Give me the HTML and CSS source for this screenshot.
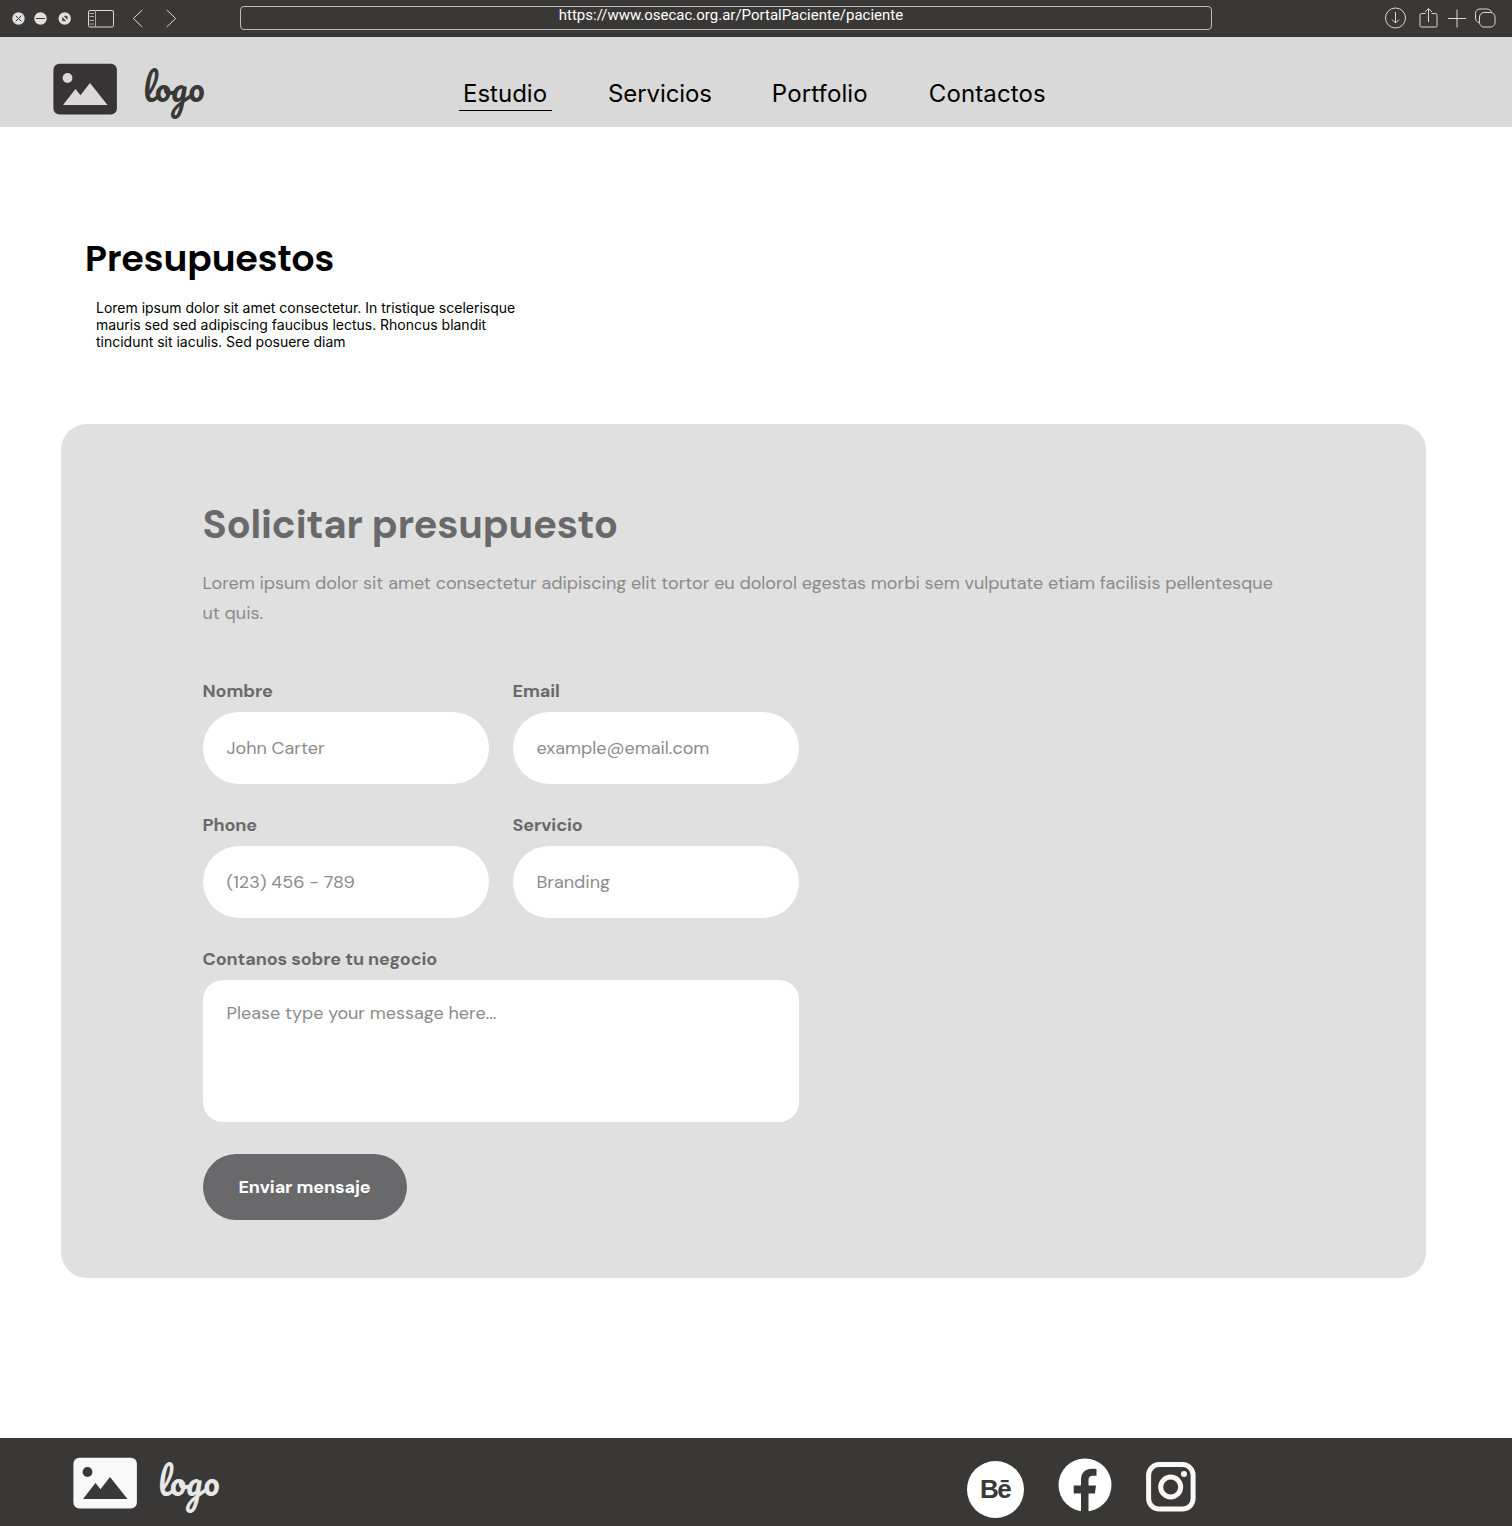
FILE: index.html
```html
<!DOCTYPE html>
<html lang="es">
<head>
<meta charset="utf-8">
<title>Presupuestos</title>
<link rel="stylesheet" href="styles.css">
</head>
<body>
<div class="browser-bar">
  <svg class="browser-left" width="190" height="37" viewBox="0 0 190 37" fill="none" stroke="#d9d9d9">
    <g fill="#e0e0e0" stroke="none"><circle cx="18.5" cy="18.5" r="6.2"/><circle cx="40.5" cy="18.5" r="6.2"/><circle cx="64.7" cy="18.5" r="6.2"/></g>
    <path d="M15.7 15.7l5.600 5.600M21.300 15.700l-5.600 5.600M36 18.500h9" stroke="#3a3836"/>
    <path d="M64.200 16.200h3v3zM62.500 17.500v3.300h3.300z" fill="#3a3836" stroke="#3a3836" stroke-width=".5"/>
    <rect x="88.500" y="10.500" width="25" height="16.500" rx="1.500"/>
    <path d="M95.500 10.500v16.500M89.500 13.500h4.500M89.500 16.500h4.500M89.500 20.500h4.500M89.500 24h4.500" stroke="#aaa"/>
    <path d="M142.300 10l-9 8.500 9 8.500M166.700 10l9 8.500-9 8.500"/>
  </svg>
  <div class="address"><span class="url">https://www.osecac.org.ar/PortalPaciente/paciente</span></div>
  <svg class="browser-right" width="142" height="37" viewBox="0 0 142 37" fill="none" stroke="#d9d9d9">
    <circle cx="25.500" cy="18" r="10"/><path d="M25.500 12v10.500M22 19.500l3.500 3.500 3.500-3.500"/>
    <path d="M55.500 13.500h-4a1.500 1.500 0 0 0-1.500 1.500v10.500a1.500 1.500 0 0 0 1.500 1.500h14a1.500 1.500 0 0 0 1.500-1.500v-10.500a1.500 1.500 0 0 0-1.500-1.500h-4M58.500 22V9M55 12l3.500-3.500 3.500 3.500"/>
    <path d="M78 18.500h18M87 9.500v18"/>
    <rect x="109.500" y="12.500" width="15.500" height="14.500" rx="4.500"/>
    <path d="M109.500 22.500c-2.500 0-4-2-4-4.500v-4.500c0-3 2-4.500 4.500-4.500h6.500c2.500 0 4.500 1 5 3.500"/>
  </svg>
</div>

<header class="site-header">
  <a class="brand">
    <svg width="64" height="52" viewBox="0 0 64 52"><rect x=".4" y=".700" width="63.500" height="50.800" rx="6" fill="#383435"/><g fill="#d9d9d9"><circle cx="14.500" cy="15" r="4.900"/><path d="M10 42L22.500 26l5 6.300L37 20l17.500 22z"/></g></svg>
    <span class="wordmark">logo</span>
  </a>
  <nav class="nav">
    <a class="nav-link active">Estudio</a>
    <a class="nav-link services">Servicios</a>
    <a class="nav-link portfolio">Portfolio</a>
    <a class="nav-link contact">Contactos</a>
  </nav>
</header>

<main>
  <section class="intro">
    <h1>Presupuestos</h1>
    <p>Lorem ipsum dolor sit amet consectetur. In tristique scelerisque<br>mauris sed sed adipiscing faucibus lectus. Rhoncus blandit<br>tincidunt sit iaculis. Sed posuere diam</p>
  </section>

  <form class="quote">
    <h2>Solicitar presupuesto</h2>
    <p class="lead">Lorem ipsum dolor sit amet consectetur adipiscing elit tortor eu dolorol egestas morbi sem vulputate etiam facilisis pellentesque<br>ut quis.</p>
    <div class="fields">
      <label class="field">Nombre<input type="text" placeholder="John Carter"></label>
      <label class="field">Email<input type="text" placeholder="example@email.com"></label>
      <label class="field">Phone<input type="text" placeholder="(123) 456 - 789"></label>
      <label class="field">Servicio<input type="text" placeholder="Branding"></label>
      <label class="field wide">Contanos sobre tu negocio<textarea placeholder="Please type your message here..."></textarea></label>
    </div>
    <button class="submit" type="button">Enviar mensaje</button>
  </form>
</main>

<footer class="site-footer">
  <a class="brand brand-light">
    <svg width="64" height="52" viewBox="0 0 64 52"><rect x=".4" y=".700" width="63.500" height="50.800" rx="6" fill="#f8f8f8"/><g fill="#3a3836"><circle cx="14.500" cy="15" r="4.900"/><path d="M10 42L22.500 26l5 6.300L37 20l17.500 22z"/></g></svg>
    <span class="wordmark">logo</span>
  </a>
  <div class="social">
    <a class="behance">Bē</a>
    <svg class="facebook" width="54" height="54" viewBox="0 0 54 54"><circle cx="27" cy="27" r="26.500" fill="#fff"/><path d="M23 54V35.500h-7.300v-8H23V22c0-7.500 4.500-11.300 11-11.300 1.800 0 3.300.1 4.500.4v6.700h-3.700c-3 0-4.300 1.700-4.300 4.200v5.500h7.500l-1.100 8h-6.400V54z" fill="#3a3836"/></svg>
    <svg class="instagram" width="50" height="50" viewBox="0 0 50 50" fill="none" stroke="#f8f8f8" stroke-width="5"><rect x="2.600" y="2.600" width="44.500" height="44.500" rx="10.500"/><circle cx="24.700" cy="25" r="10"/><circle cx="38" cy="12" r="3" fill="#f8f8f8" stroke="none"/></svg>
  </div>
</footer>
</body>
</html>
```
FILE: styles.css
```css
* { box-sizing: border-box; }
body { margin: 0; min-height: 1526px; display: flex; flex-direction: column; background: #fff; color: #000; font-family: Inter, sans-serif; }
h1, h2, p { margin: 0; }
svg { display: block; flex: none; }

.browser-bar { height: 37px; display: flex; background: #3a3836; }
.browser-left { margin-right: 50px; }
.browser-right { margin-left: auto; }
.address { width: 972px; height: 24px; margin-top: 5.500px; padding-left: 10px; border: 1.500px solid #bdbdbd; border-radius: 4px; text-align: center; line-height: 15px; }
.url { font: 15px/15px Roboto, sans-serif; color: #fff; }

.site-header { height: 90px; display: flex; padding-left: 53px; background: #d9d9d9; }
.brand { display: flex; gap: 26px; padding-top: 26px; width: 406px; }
.wordmark { height: 52px; font: 400 36px/48px Pacifico, Lato, cursive; color: #3a3836; }
.nav { display: flex; gap: 52px; padding-top: 40px; }
.nav-link { height: 34px; padding: 0 4px; font-size: 24px; line-height: 33px; }
.nav-link.active { padding-right: 5px; border-bottom: 1px solid #000; }
.services { margin-right: 0; letter-spacing: -.1px; }
.portfolio { letter-spacing: .12px; }
.contact { margin-left: 1px; letter-spacing: .12px; }

.intro { padding: 104px 0 0 85px; height: 297px; }
.intro h1 { font-family: Poppins, Inter, sans-serif; font-size: 36.100px; line-height: 56px; font-weight: 600; }
.intro p { padding: 12px 0 0 11px; font-size: 14px; line-height: 17px; letter-spacing: -.01px; }

.quote { width: 1365px; height: 854px; margin-left: 61px; padding: 75px 141.500px 0; border-radius: 26px; background: #e0e0e0; color: #69696b; font-family: "DM Sans", Inter, sans-serif; }
.quote h2 { font-size: 40px; line-height: 50px; font-weight: 700; letter-spacing: -.27px; }
.lead { margin-top: 18.500px; font-size: 18px; line-height: 30px; letter-spacing: -.025px; color: #8b8b8b; white-space: nowrap; }
.fields { width: 596px; margin-top: 53.500px; display: grid; grid-template-columns: 286px 286px; column-gap: 24px; row-gap: 31px; }
.field { display: flex; flex-direction: column; gap: 11px; font-size: 18px; line-height: 20px; font-weight: 700; letter-spacing: -.1px; }
.wide { grid-column: 1 / -1; }
input, textarea { display: block; width: 100%; height: 72px; padding: 0 24px; border: 0; border-radius: 36px; background: #fff; font: inherit; font-weight: 400; letter-spacing: -.01px; resize: none; }
textarea { height: 142px; padding-top: 23px; border-radius: 20px; }
::placeholder { color: #8b8b8b; opacity: 1; }
.submit { width: 204px; height: 66px; margin-top: 32px; padding: 0; border: 0; border-radius: 33px; background: #69696b; color: #fff; font: inherit; font-size: 18px; font-weight: 700; letter-spacing: -.1px; }

.site-footer { height: 88px; margin-top: auto; display: flex; padding-left: 73px; background: #3a3836; }
.brand-light { width: 893.500px; gap: 21px; padding-top: 19px; }
.brand-light .wordmark { color: #e8e8e8; }
.social { display: flex; }
.behance { width: 57px; height: 57px; margin-top: 22.500px; border-radius: 50%; background: #fff; color: #3a3836; font: 700 26px/56px "Liberation Sans", sans-serif; letter-spacing: -1.500px; text-align: center; }
.facebook { margin: 19.500px 34px 0 34.500px; }
.instagram { margin-top: 23.500px; }
```
